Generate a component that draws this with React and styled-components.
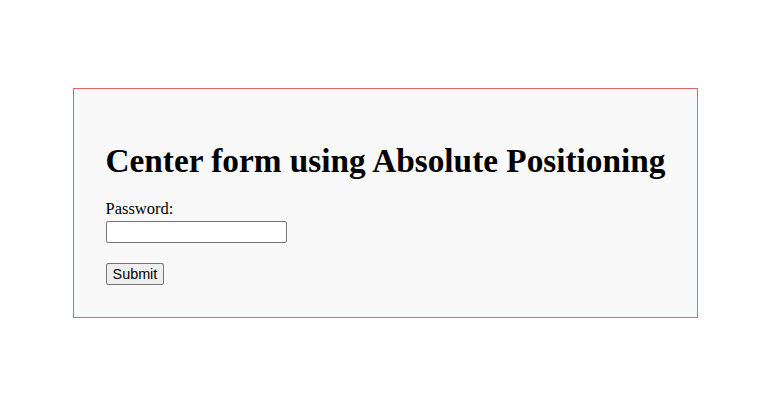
import React from "react"
import styled, { createGlobalStyle } from "styled-components"

const GlobalStyle = createGlobalStyle`
  html, body {
    margin: 0;
    padding: 0;
    background: #ffffff;
  }
  body {
    font-family: "Liberation Serif", "Times New Roman", serif;
    font-size: 16px;
    color: #000;
  }
`

const Page = styled.div`
  height: 412px;
  display: flex;
  align-items: center;
  justify-content: center;
  padding: 0 0 6px 3px;
  box-sizing: border-box;
`

const Card = styled.div`
  background: #f9f9f9;
  border: 1px solid #e06666;
  padding: 32px;
`

const Title = styled.h1`
  font-family: "Liberation Serif", "Times New Roman", serif;
  font-size: 33.3px;
  line-height: 37px;
  font-weight: bold;
  margin: 21px 0;
  white-space: nowrap;
`

const Form = styled.form`
  display: flex;
  flex-direction: column;
  align-items: flex-start;
`

const Label = styled.label`
  font-size: 16.5px;
  line-height: 18px;
`

const Input = styled.input`
  box-sizing: border-box;
  width: 181px;
  height: 22px;
  margin: 3px 0 0;
  padding: 1px 2px;
  border: 1px solid #767676;
  border-radius: 2px;
  background: #fff;
  font-family: "Liberation Sans", Arial, sans-serif;
  font-size: 13.33px;
`

const Button = styled.button`
  box-sizing: border-box;
  height: 22px;
  margin-top: 20px;
  padding: 1px 6px;
  border: 1px solid #767676;
  border-radius: 2px;
  background: #efefef;
  color: #000;
  font-family: "Liberation Sans", Arial, sans-serif;
  font-size: 14.4px;
`

const App = () => {
  return (
    <>
      <GlobalStyle />
      <Page>
        <Card>
          <Title>Center form using Absolute Positioning</Title>
          <Form onSubmit={(e) => e.preventDefault()}>
            <Label htmlFor="password">Password:</Label>
            <Input id="password" type="password" />
            <Button type="submit">Submit</Button>
          </Form>
        </Card>
      </Page>
    </>
  )
}

export default App
